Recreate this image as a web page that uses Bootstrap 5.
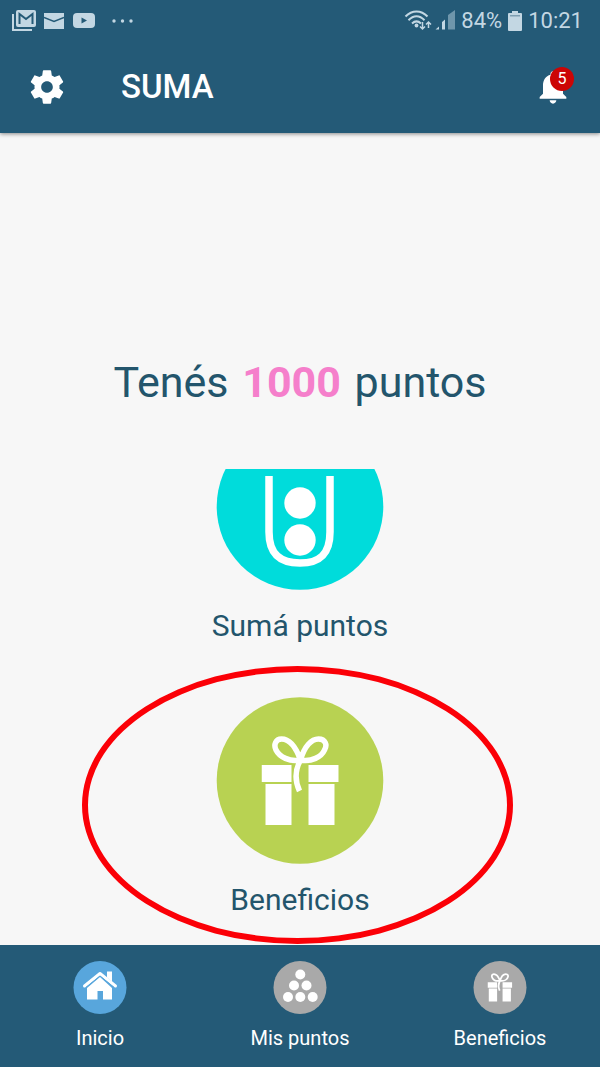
<!DOCTYPE html>
<html lang="es">
<head>
<meta charset="utf-8">
<meta name="viewport" content="width=device-width, initial-scale=1">
<title>SUMA</title>
<link href="https://cdn.jsdelivr.net/npm/bootstrap@5.3.0/dist/css/bootstrap.min.css" rel="stylesheet">
<style>
  :root { --petrol: #245a77; --ink: #23556c; --mist: #c3d7e3; }
  body { font-family: Roboto, "Liberation Sans", sans-serif; background: #f7f7f7; color: var(--ink); }
  svg { display: block; flex: none; }
  .bg-petrol { background: var(--petrol); }
  .app-header { box-shadow: 0 1px 4px rgba(0, 0, 0, .45); }
  .status-row { height: 40px; padding: 1px 17px 0 12px; color: var(--mist); font-size: 22px; line-height: 24px; }
  .status-right { gap: 6px; }
  .title-row { height: 93px; padding: 1px 27px 0; }
  .app-title { font-size: 33px; line-height: 40px; font-weight: 500; margin-left: 54px; }
  .count-badge { top: 0; right: -1px; width: 24px; height: 24px; background: #cc0505; font-size: 16px; line-height: 24px; }
  .points-total { font-size: 43px; line-height: 52px; margin: 223px 0 61px; font-weight: 400; }
  .points-total strong { color: #f57fcb; font-weight: 700; margin: 0 3px; }
  .tile { color: var(--ink); font-size: 30px; line-height: 36px; gap: 18px; }
  .tiles { gap: 53px; padding-bottom: 27px; }
  .marker { inset: -31px -129px -26px -134px; border: 6px solid #fb0007; pointer-events: none; }
  .tab-item { font-size: 20px; line-height: 24px; gap: 12px; padding: 16px 0 17px; }
</style>
</head>
<body class="d-flex flex-column min-vh-100">
<svg width="0" height="0" class="position-absolute" aria-hidden="true">
  <symbol id="gift" viewBox="0 0 78 90">
    <path fill="#fff" d="M0 29h30v17H0zM47 29h30v17H47zM4 48h26v41H4zM47 48h26v41H47z"/>
    <path fill="none" stroke="#fff" stroke-width="5.5" d="M39 24C34 10 27 3 20 3C14 3 12 9 14.500 14C18 21 28 26 39 24C50 26 60 21 63 14C66 9 64 3 57 3C50 3 43 10 39 24C34 33 33 44 38 55"/>
  </symbol>
</svg>

<header class="app-header bg-petrol position-relative">
  <div class="status-row d-flex align-items-center justify-content-between">
    <div class="d-flex align-items-center">
      <svg width="24" height="22" viewBox="0 0 24 22" fill="none" stroke="#c3d7e3">
        <path stroke-width="2" d="M1 4v16h19"/>
        <rect x="4" y="0" width="20" height="17" rx="2" fill="#c3d7e3" stroke="none"/>
        <path stroke="#245a77" stroke-width="2" d="M7.500 14V4l6.500 5 6.500-5v10"/>
      </svg>
      <svg class="ms-2" width="20" height="16" viewBox="0 0 20 16">
        <path fill="#c3d7e3" d="M0 0h20v16H0z"/>
        <path fill="none" stroke="#245a77" stroke-width="1.500" d="M0 4.500l10 4 10-4"/>
      </svg>
      <svg class="ms-2" width="24" height="16" viewBox="0 0 24 16">
        <rect x="1" width="22" height="15" rx="4" fill="#c3d7e3"/>
        <path fill="#245a77" d="M9.500 4.500l5.500 3-5.500 3z"/>
      </svg>
      <svg class="ms-3" width="22" height="4" viewBox="0 0 22 4" fill="#c3d7e3">
        <circle cx="2" cy="2" r="1.700"/><circle cx="10.500" cy="2" r="1.700"/><circle cx="19" cy="2" r="1.700"/>
      </svg>
    </div>
    <div class="status-right d-flex align-items-center">
      <svg width="52" height="22" viewBox="0 0 52 22" fill="none" stroke="#c3d7e3" stroke-width="2">
        <path d="M2.500 6.500C9-.3 18-.3 24.500 6.500M5.500 10.300C10.500 5 16.500 5 21.500 10.300M9 13.500C12 10.700 15 10.700 18 13.500"/>
        <circle cx="13.500" cy="15.500" r="1.900" fill="#c3d7e3" stroke="none"/>
        <path stroke-width="1.500" d="M19.500 12v7M17 16.500l2.500 2.500 2.500-2.500M25.500 18v-6M23 14.500l2.500-2.500 2.500 2.500"/>
        <path fill="#c3d7e3" stroke="none" d="M32.500 19.500l3.500-3v3zM39 12l3-2.500v10h-3z"/>
        <path fill="#6f96ab" stroke="none" d="M45 5l7-5v19.500h-7z"/>
      </svg>
      <span>84%</span>
      <svg width="14" height="20" viewBox="0 0 14 20" fill="#c3d7e3">
        <path d="M4 0h6v2h3q1 0 1 1v16q0 1-1 1H1q-1 0-1-1V3q0-1 1-1h3z"/>
        <path fill="#7e9fb2" d="M2 4h10v1.500H2z"/>
      </svg>
      <span>10:21</span>
    </div>
  </div>
  <div class="title-row d-flex align-items-center text-white">
    <button type="button" class="btn p-0 border-0" aria-label="Configuración">
      <svg width="40" height="40" viewBox="0 0 24 24" fill="#fff"><path d="M19.430 12.980c.04-.32.07-.64.07-.98s-.03-.66-.07-.98l2.110-1.650c.19-.15.24-.42.12-.64l-2-3.460c-.12-.22-.39-.3-.61-.22l-2.490 1c-.52-.4-1.080-.73-1.690-.98l-.38-2.650C14.460 2.180 14.250 2 14 2h-4c-.25 0-.46.18-.49.42l-.38 2.650c-.61.25-1.170.59-1.690.98l-2.490-1c-.23-.09-.49 0-.61.22l-2 3.460c-.13.22-.07.49.12.64l2.110 1.650c-.04.32-.07.65-.07.98s.03.66.07.98l-2.110 1.650c-.19.15-.24.42-.12.64l2 3.460c.12.22.39.3.61.22l2.490-1c.52.4 1.080.73 1.690.98l.38 2.650c.03.24.24.42.49.42h4c.25 0 .46-.18.49-.42l.38-2.650c.61-.25 1.170-.59 1.690-.98l2.490 1c.23.09.49 0 .61-.22l2-3.460c.12-.22.07-.49-.12-.64l-2.110-1.650zM12 15.500c-1.930 0-3.500-1.570-3.500-3.500s1.570-3.500 3.500-3.500 3.500 1.570 3.500 3.500-1.570 3.500-3.500 3.500z"/></svg>
    </button>
    <h1 class="app-title mb-0">SUMA</h1>
    <button type="button" class="btn p-0 border-0 ms-auto position-relative" aria-label="Notificaciones">
      <svg width="40" height="40" viewBox="0 0 24 24" fill="#fff"><path d="M12 22c1.100 0 2-.9 2-2h-4c0 1.100.89 2 2 2zm6-6v-5c0-3.070-1.640-5.640-4.500-6.320V4c0-.83-.67-1.500-1.500-1.500s-1.500.67-1.500 1.500v.68C7.630 5.360 6 7.920 6 11v5l-2 2v1h16v-1l-2-2z"/></svg>
      <span class="count-badge position-absolute rounded-circle text-white">5</span>
    </button>
  </div>
</header>

<main class="flex-grow-1 d-flex flex-column align-items-center">
  <h2 class="points-total text-center">Tenés <strong>1000</strong> puntos</h2>
  <div class="tiles d-flex flex-column align-items-center">
    <a href="#" class="tile d-flex flex-column align-items-center text-decoration-none">
      <svg width="168" height="121" viewBox="0 46 168 121">
        <circle cx="84" cy="83.500" r="83.300" fill="#00dcdb"/>
        <path fill="none" stroke="#fff" stroke-width="7.500" d="M53 53v56c0 23 12 31 31 31s30-8 30-31V53"/>
        <circle cx="84" cy="80" r="15.700" fill="#fff"/><circle cx="84" cy="117" r="15.700" fill="#fff"/>
      </svg>
      <span>Sumá puntos</span>
    </a>
    <a href="#" class="tile d-flex flex-column align-items-center text-decoration-none position-relative">
      <svg width="168" height="167" viewBox="0 0 168 167">
        <circle cx="84" cy="83.500" r="83.300" fill="#b8d252"/>
        <use href="#gift" x="45.500" y="39" width="78" height="90"/>
      </svg>
      <span>Beneficios</span>
      <span class="marker position-absolute rounded-circle"></span>
    </a>
  </div>
</main>

<nav class="bg-petrol row row-cols-3 g-0" aria-label="Principal">
  <a href="#" class="tab-item col d-flex flex-column align-items-center text-white text-decoration-none" aria-current="page">
    <svg width="54" height="53" viewBox="0 0 54 53">
      <circle cx="27" cy="26.500" r="26.500" fill="#58a6dc"/>
      <path fill="#fff" d="M14 27l13-11 12 11v11.500h-9V30h-5.500v8.500H14z"/>
      <path fill="none" stroke="#fff" stroke-width="3" stroke-linecap="round" stroke-linejoin="round" d="M11.500 25L27 12.500 42.500 25"/>
      <path fill="none" stroke="#58a6dc" d="M13 26.500l14-11.500 14 11.500"/>
      <path fill="#fff" d="M34 10.500h5v10l-5-4z"/>
    </svg>
    <span>Inicio</span>
  </a>
  <a href="#" class="tab-item col d-flex flex-column align-items-center text-white text-decoration-none">
    <svg width="54" height="53" viewBox="0 0 54 53" fill="#fff">
      <circle cx="27" cy="26.500" r="26.500" fill="#a9a9a9"/>
      <circle cx="27.300" cy="13.500" r="5"/><circle cx="21" cy="24.500" r="5"/><circle cx="33.500" cy="24.500" r="5"/>
      <circle cx="15" cy="36" r="5"/><circle cx="27.300" cy="36" r="5"/><circle cx="39.700" cy="36" r="5"/>
    </svg>
    <span>Mis puntos</span>
  </a>
  <a href="#" class="tab-item col d-flex flex-column align-items-center text-white text-decoration-none">
    <svg width="54" height="53" viewBox="0 0 54 53">
      <circle cx="27" cy="26.500" r="26.500" fill="#a9a9a9"/>
      <use href="#gift" x="14.500" y="12" width="25" height="29"/>
    </svg>
    <span>Beneficios</span>
  </a>
</nav>
<script src="https://cdn.jsdelivr.net/npm/bootstrap@5.3.0/dist/js/bootstrap.bundle.min.js"></script>
</body>
</html>
